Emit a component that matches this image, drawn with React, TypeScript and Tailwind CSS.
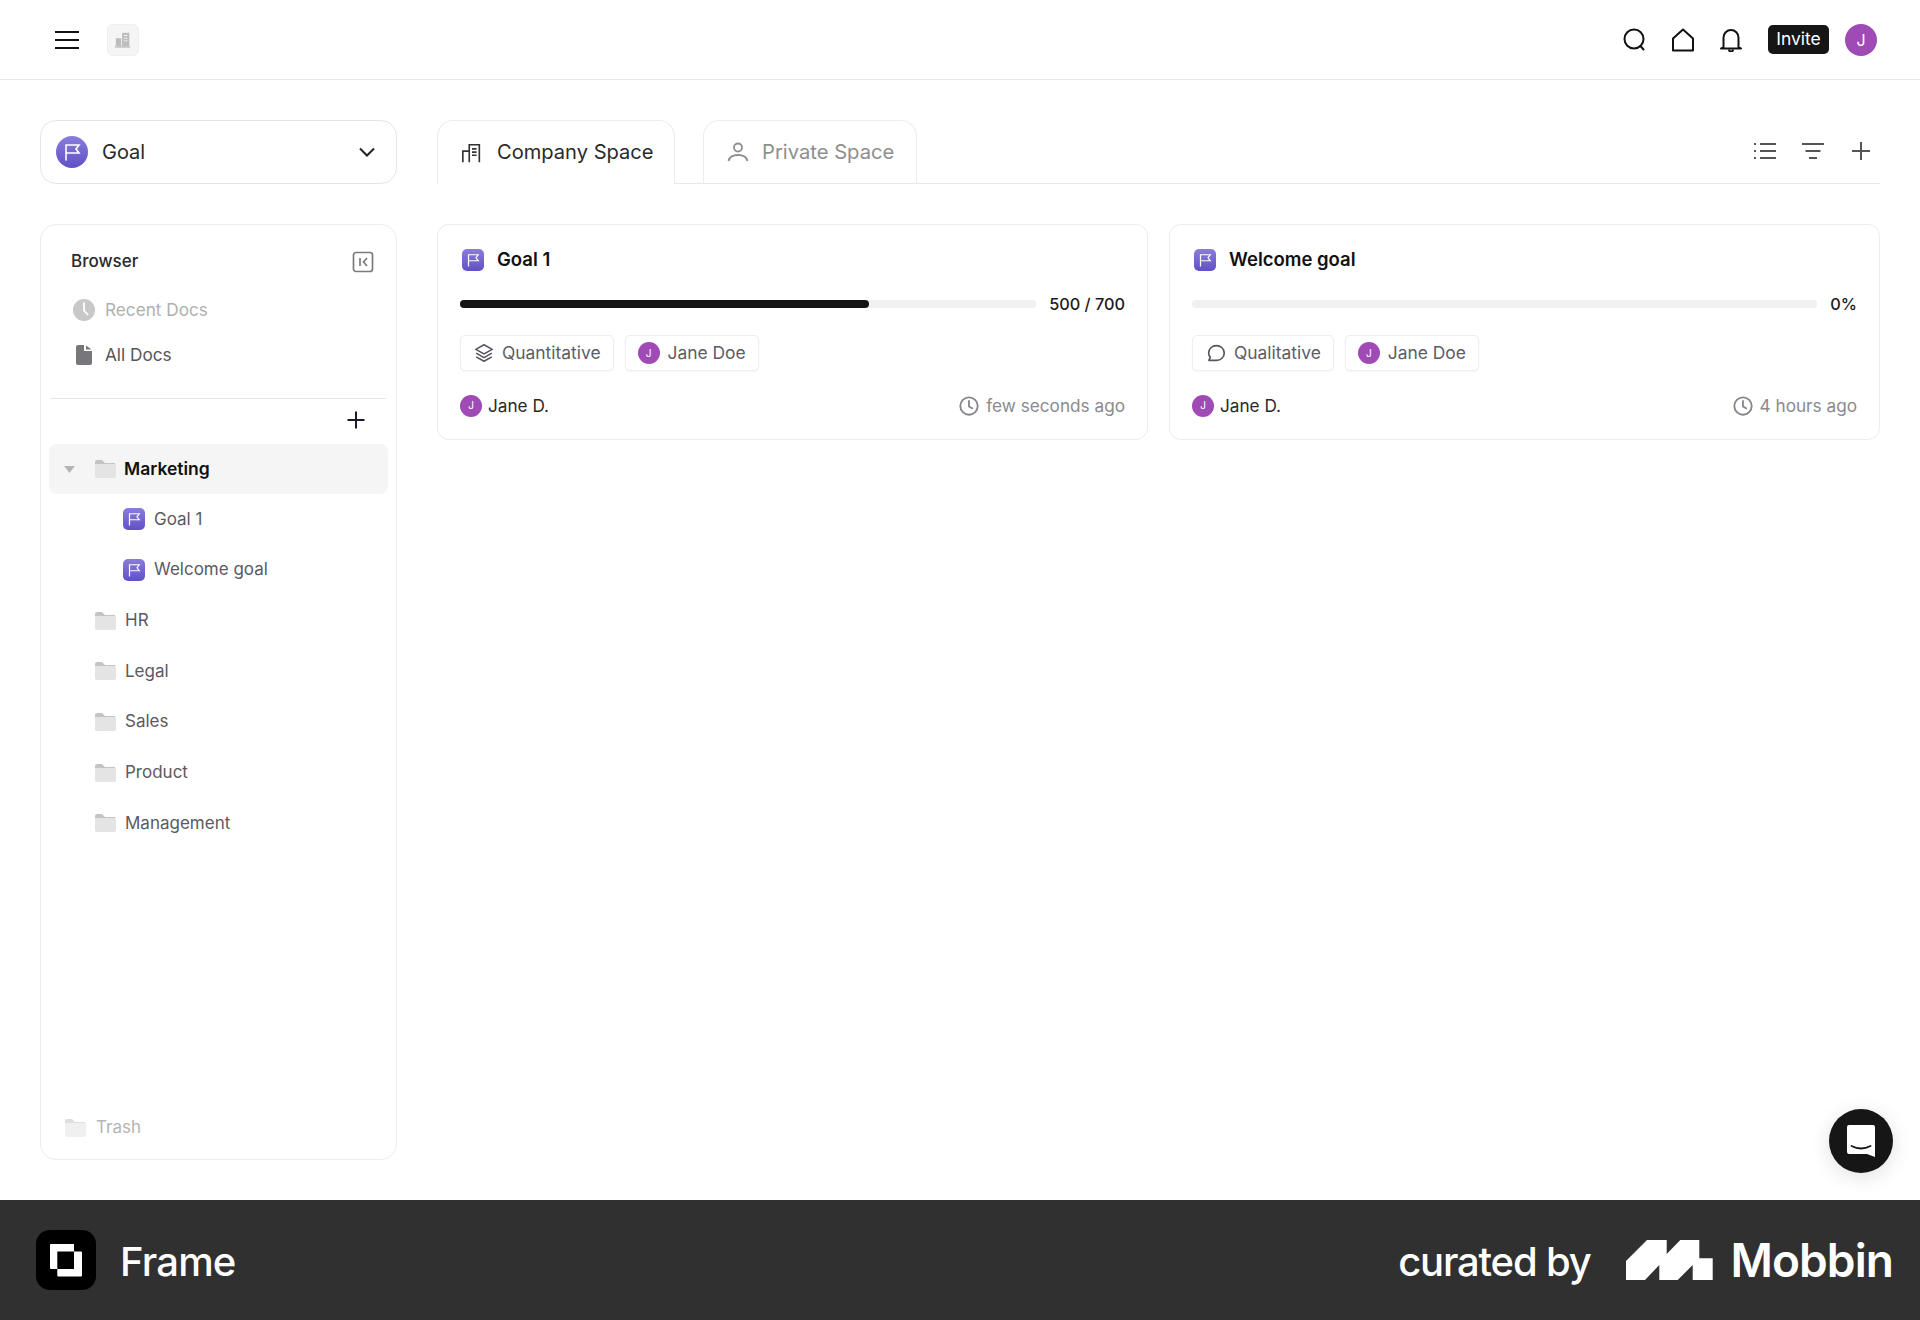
import React from "react";

const Flag = ({ className = "" }: { className?: string }) => (
  <svg viewBox="0 0 24 24" fill="none" className={className}>
    <path d="M6 20.5V5H19L16 9L19 13H6" stroke="#fff" strokeWidth="1.6" strokeLinejoin="miter" />
  </svg>
);

const GoalIcon = () => (
  <span className="flex h-[22px] w-[22px] shrink-0 items-center justify-center rounded-[5px] bg-gradient-to-b from-[#8a7ddd] to-[#6150c6]">
    <Flag className="h-[18px] w-[18px]" />
  </span>
);

const Folder = ({ light = false }: { light?: boolean }) => (
  <svg viewBox="0 0 22 20" className="h-[20px] w-[22px] shrink-0">
    <path d="M1 3a2 2 0 0 1 2-2h5l3 3h10v2H1z" fill={light ? "#dedede" : "#c4c4c4"} />
    <path d="M1 5h20a1 1 0 0 1 1 0v12a2 2 0 0 1-2 2H3a2 2 0 0 1-2-2z" fill={light ? "#f0f0f0" : "#e4e4e4"} />
  </svg>
);

const Avatar = ({ size }: { size: "sm" | "lg" }) =>
  size === "lg" ? (
    <span className="flex h-[32px] w-[32px] items-center justify-center rounded-full bg-[#a04bb5] text-[16px] text-white">J</span>
  ) : (
    <span className="flex h-[22px] w-[22px] shrink-0 items-center justify-center rounded-full bg-[#a04bb5] text-[10px] text-white">J</span>
  );

const Chip = ({ icon, label }: { icon: React.ReactNode; label: string }) => (
  <span className="flex h-[36px] items-center gap-[7px] rounded-[5px] border border-[#eeeeee] bg-white px-[12px] text-[17.4px] text-[#5c5c66] shadow-[0_1px_2px_rgba(0,0,0,0.04)]">
    {icon}
    {label}
  </span>
);

const Clock = () => (
  <svg viewBox="0 0 24 24" fill="none" stroke="#85858b" strokeWidth="2" className="h-[22px] w-[22px]">
    <circle cx="12" cy="12" r="9.5" />
    <path d="M12 6.5V12.5L15.5 14.5" strokeLinecap="round" />
  </svg>
);

const Layers = () => (
  <svg viewBox="0 0 24 24" fill="none" stroke="#55555e" strokeWidth="1.7" strokeLinejoin="round" className="h-[22px] w-[22px]">
    <path d="M12 3L21 8L12 13L3 8Z" />
    <path d="M3.5 12.2L12 17L20.5 12.2" />
    <path d="M3.5 16.2L12 21L20.5 16.2" />
  </svg>
);

const Bubble = () => (
  <svg viewBox="0 0 24 24" fill="none" stroke="#55555e" strokeWidth="1.8" strokeLinejoin="round" className="h-[22px] w-[22px]">
    <path d="M12.5 4C17.2 4 21 7.4 21 12s-3.8 8-8.5 8H4.2l1.6-3.3C4.7 15.4 4 13.8 4 12c0-4.6 3.8-8 8.5-8z" />
  </svg>
);

type CardProps = {
  title: string;
  value: string;
  pct: number;
  chipIcon: React.ReactNode;
  chipLabel: string;
  time: string;
};

const Card = ({ title, value, pct, chipIcon, chipLabel, time }: CardProps) => (
  <div className="flex h-[216px] flex-1 flex-col rounded-[12px] border border-[#ececec] bg-white px-[22px]">
    <div className="mt-[24px] flex h-[22px] items-center gap-[13px] pl-[2px] text-[18.5px] font-semibold text-[#111111]">
      <GoalIcon />
      {title}
    </div>
    <div className="mt-[22px] flex h-[22px] items-center gap-[13px]">
      <div className="h-[8px] flex-1 rounded-full bg-[#f0f0f0]">
        <div className="h-full rounded-full bg-[#141414]" style={{ width: `${pct}%` }} />
      </div>
      <span className="text-[16.3px] font-medium text-[#1a1a1a]">{value}</span>
    </div>
    <div className="mt-[20px] flex gap-[11px]">
      <Chip icon={chipIcon} label={chipLabel} />
      <Chip
        icon={<span className="mr-[1px] flex h-[22px] w-[22px] items-center justify-center rounded-full bg-[#a04bb5] text-[10px] text-white">J</span>}
        label="Jane Doe"
      />
    </div>
    <div className="mt-[22px] flex items-center text-[17.2px]">
      <Avatar size="sm" />
      <span className="ml-[6px] text-[#2a2a2a]">Jane D.</span>
      <span className="ml-auto flex items-center gap-[6px] text-[#8a8a8f]">
        <Clock />
        {time}
      </span>
    </div>
  </div>
);

const TreeRow = ({ label }: { label: string }) => (
  <div className="flex h-[50.7px] items-center gap-[9px] pl-[45px] text-[17px] text-[#5a5a5f]">
    <Folder />
    {label}
  </div>
);

const GoalRow = ({ label }: { label: string }) => (
  <div className="flex h-[50.7px] items-center gap-[9px] pl-[74px] text-[17px] text-[#5a5a5f]">
    <GoalIcon />
    {label}
  </div>
);

export default function App() {
  return (
    <div className="relative flex h-[1320px] w-[1920px] flex-col overflow-hidden bg-white font-['Inter',sans-serif]">
      <header className="flex h-[80px] shrink-0 items-center border-b border-[#e8e8e8] pl-[55px] pr-[43px]">
        <svg viewBox="0 0 24 20" className="h-[20px] w-[24px]" stroke="#111" strokeWidth="2.2">
          <path d="M0 2H24M0 10H24M0 18H24" />
        </svg>
        <span className="ml-[28px] flex h-[32px] w-[32px] items-center justify-center rounded-[6px] border border-[#eeeeee] bg-[#f5f5f5]">
          <svg viewBox="0 0 20 20" className="h-[18px] w-[18px]" fill="#bdbdbd">
            <rect x="2" y="8" width="6" height="9" />
            <rect x="9" y="2" width="8" height="15" />
            <rect x="1" y="17" width="17" height="1.5" />
            <path d="M11 5H15M11 8H15M11 11H15" stroke="#f5f5f5" strokeWidth="1" />
          </svg>
        </span>
        <div className="ml-auto flex items-center">
          <svg viewBox="0 0 24 24" fill="none" stroke="#111" strokeWidth="2" className="h-[24px] w-[24px]">
            <circle cx="11" cy="11" r="9.5" />
            <path d="M17.5 18L20.5 21.5" strokeLinecap="round" />
          </svg>
          <svg viewBox="0 0 24 24" fill="none" stroke="#111" strokeWidth="2" strokeLinejoin="round" className="ml-[24px] h-[24px] w-[24px]">
            <path d="M12 1.5L22 10.5V22.5H2V10.5Z" />
          </svg>
          <svg viewBox="0 0 24 24" fill="none" stroke="#111" strokeWidth="2" strokeLinejoin="round" className="ml-[24px] h-[24px] w-[24px]">
            <path d="M4.5 19V9.5a7.5 7.5 0 0 1 15 0V19L22 20.5H2Z" />
            <path d="M10 21.5a2 2 0 0 0 4 0" />
          </svg>
          <span className="ml-[25px] flex h-[29px] w-[61px] items-center justify-center rounded-[5px] bg-[#161616] text-[17.5px] text-white">Invite</span>
          <span className="ml-[16px]"><Avatar size="lg" /></span>
        </div>
      </header>

      <main className="flex min-h-0 flex-1 gap-[40px] px-[40px] pt-[40px]">
        <aside className="flex w-[357px] shrink-0 flex-col">
          <div className="flex h-[64px] items-center rounded-[16px] border border-[#e4e4e4] pl-[15px] pr-[17px]">
            <span className="flex h-[32px] w-[32px] items-center justify-center rounded-full bg-gradient-to-b from-[#8a7ddd] to-[#6150c6]">
              <Flag className="h-[24px] w-[24px]" />
            </span>
            <span className="ml-[14px] text-[20px] text-[#2a2a2a]">Goal</span>
            <svg viewBox="0 0 24 24" fill="none" stroke="#222" strokeWidth="2" className="ml-auto h-[24px] w-[24px]">
              <path d="M5 8.5L12 15.5L19 8.5" />
            </svg>
          </div>

          <div className="mb-[40px] mt-[40px] flex flex-1 flex-col rounded-[16px] border border-[#ececec] px-[8px]">
            <div className="mt-[19px] flex h-[36px] items-center pl-[22px] pr-[14px] text-[17px] font-medium text-[#2a2a2a]">
              Browser
              <svg viewBox="0 0 22 22" fill="none" stroke="#7b7b7b" strokeWidth="1.7" className="ml-auto h-[22px] w-[22px]">
                <rect x="1.5" y="1.5" width="19" height="19" rx="2.5" />
                <path d="M8 7V15M15 7L11.5 11L15 15" />
              </svg>
            </div>
            <div className="mt-[7px] flex h-[45px] items-center gap-[10px] pl-[24px] text-[17.2px] text-[#b0b0b0]">
              <svg viewBox="0 0 22 22" className="h-[22px] w-[22px]">
                <circle cx="11" cy="11" r="11" fill="#c8c8c8" />
                <path d="M11 3.5V11.5L15 16" stroke="#fff" strokeWidth="1.8" fill="none" />
              </svg>
              Recent Docs
            </div>
            <div className="flex h-[45px] items-center gap-[13px] pl-[27px] text-[17.2px] text-[#55555a]">
              <svg viewBox="0 0 16 20" className="h-[20px] w-[16px]">
                <path d="M0 2a2 2 0 0 1 2-2h6v6h8v12a2 2 0 0 1-2 2H2a2 2 0 0 1-2-2z" fill="#77777b" />
                <path d="M10 0.5L15.5 4.5H10z" fill="#77777b" />
              </svg>
              All Docs
            </div>
            <div className="mx-[2px] mt-[21px] h-px bg-[#e8e8e8]" />
            <div className="flex h-[45px] items-center justify-end pb-[3px] pr-[22px]">
              <svg viewBox="0 0 20 20" stroke="#1a1a2a" strokeWidth="2" className="h-[20px] w-[20px]">
                <path d="M10 1.5V18.5M1.5 10H18.5" />
              </svg>
            </div>
            <div className="flex h-[50px] items-center gap-[18px] rounded-[8px] bg-[#f5f5f5] pl-[14px] text-[17.5px] font-semibold text-[#111111]">
              <svg viewBox="0 0 14 10" className="h-[9px] w-[13px] shrink-0" fill="#b4b4b4">
                <path d="M1 1H13L7 9Z" />
              </svg>
              <span className="flex items-center gap-[8px]">
                <Folder />
                Marketing
              </span>
            </div>
            <GoalRow label="Goal 1" />
            <GoalRow label="Welcome goal" />
            <TreeRow label="HR" />
            <TreeRow label="Legal" />
            <TreeRow label="Sales" />
            <TreeRow label="Product" />
            <TreeRow label="Management" />
            <div className="mb-[6px] mt-auto flex h-[50px] items-center gap-[10px] pl-[15px] text-[17px] text-[#b4b4b4]">
              <Folder light />
              Trash
            </div>
          </div>
        </aside>

        <section className="flex min-w-0 flex-1 flex-col">
          <div className="flex h-[64px] border-b border-[#e8e8e8]">
            <div className="-mb-px flex h-[64px] w-[238px] items-center gap-[14px] rounded-t-[16px] border border-b-0 border-[#ececec] bg-white pl-[23px] text-[20.1px] text-[#2a2a2a]">
              <svg viewBox="0 0 24 24" fill="none" stroke="#333" strokeWidth="1.8" className="h-[22px] w-[22px]">
                <path d="M2 22V10H9V22M9 22V3H20V22M12 7.5H17M12 11H17M12 14.5H17" />
              </svg>
              Company Space
            </div>
            <div className="ml-[28px] flex h-[63px] w-[214px] items-center gap-[12px] rounded-t-[16px] border border-b-0 border-[#ececec] pl-[22px] text-[20.2px] text-[#8e8e8e]">
              <svg viewBox="0 0 24 24" fill="none" stroke="#8e8e8e" strokeWidth="1.8" className="h-[24px] w-[24px]">
                <circle cx="12" cy="7.5" r="4" />
                <path d="M2.5 21C3.5 16.5 7 15 12 15S20.5 16.5 21.5 21" />
              </svg>
              Private Space
            </div>
            <div className="ml-auto flex -translate-y-[1px] items-center gap-[24px] pr-[7px]">
              <svg viewBox="0 0 24 24" fill="none" stroke="#555" strokeWidth="2" className="h-[24px] w-[24px]">
                <path d="M7 5H23M7 12H23M7 19H23" />
                <path d="M1 5H3M1 12H3M1 19H3" strokeWidth="2" />
              </svg>
              <svg viewBox="0 0 24 24" fill="none" stroke="#555" strokeWidth="2" className="h-[24px] w-[24px]">
                <path d="M1 5H23M4.5 12H19.5M8 19H16" />
              </svg>
              <svg viewBox="0 0 24 24" fill="none" stroke="#555" strokeWidth="2" className="h-[24px] w-[24px]">
                <path d="M12 3V21M3 12H21" />
              </svg>
            </div>
          </div>
          <div className="mt-[40px] flex gap-[21px]">
            <Card title="Goal 1" value="500 / 700" pct={71} chipIcon={<Layers />} chipLabel="Quantitative" time="few seconds ago" />
            <Card title="Welcome goal" value="0%" pct={0} chipIcon={<Bubble />} chipLabel="Qualitative" time="4 hours ago" />
          </div>
        </section>
      </main>

      <footer className="flex h-[120px] shrink-0 items-center bg-[#303030] pl-[36px] pr-[27px] text-white">
        <span className="flex h-[60px] w-[60px] items-center justify-center rounded-[14px] bg-black">
          <svg viewBox="0 0 32 33" className="h-[33px] w-[32px]">
            <path fillRule="evenodd" fill="#fff" d="M1 0H24V7.5H31a1 1 0 0 1 1 1V31.5a1 1 0 0 1-1 1H8.3a1 1 0 0 1-1-1V25H1a1 1 0 0 1-1-1V1a1 1 0 0 1 1-1ZM7.3 7.5V25H24V7.5Z" />
          </svg>
        </span>
        <span className="ml-[24px] mt-[4px] text-[40px] font-medium tracking-[-0.02em]">Frame</span>
        <span className="ml-auto mt-[4px] text-[40px] font-medium tracking-[-0.03em]">curated by</span>
        <svg viewBox="0 0 87 40" className="ml-[36px] h-[40px] w-[87px]" fill="#fff">
          <path d="M0 40V21L21 0H40.7V14L54.3 0H73.3V18.3H86.7V40H66.7V25L51.7 40H33.3V25L19 40Z" />
        </svg>
        <span className="ml-[17px] text-[46px] font-semibold tracking-[-0.02em]">Mobbin</span>
      </footer>

      <div className="absolute left-[1829px] top-[1109px] flex h-[64px] w-[64px] items-center justify-center rounded-full bg-[#161616] shadow-[0_4px_20px_rgba(0,0,0,0.12)]">
        <svg viewBox="0 0 28 32" className="h-[32px] w-[28px]">
          <path d="M2 0H26a2 2 0 0 1 2 2V32L20 29H2a2 2 0 0 1-2-2V2a2 2 0 0 1 2-2Z" fill="#fff" />
          <path d="M4.5 21Q14 26 23.5 21" stroke="#161616" strokeWidth="1.8" fill="none" strokeLinecap="round" />
        </svg>
      </div>
    </div>
  );
}
